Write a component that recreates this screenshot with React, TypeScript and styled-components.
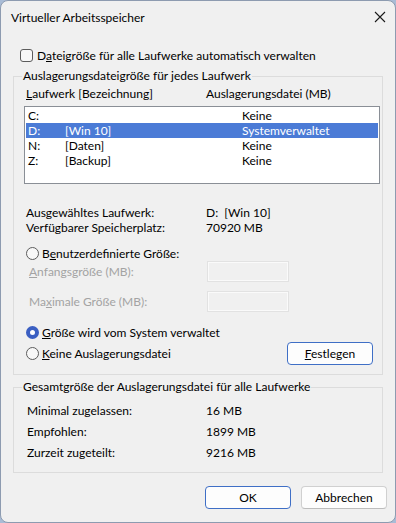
import React from 'react'
import styled, { createGlobalStyle } from 'styled-components'

const GlobalStyle = createGlobalStyle`
    html, body {
        margin: 0;
        padding: 0;
        background: #a9bcd6;
    }
    body {
        font-family: Lato, "Liberation Sans", Arial, sans-serif;
        font-size: 12px;
        color: #000;
    }
`

const SWindow = styled.div`
    box-sizing: border-box;
    width: 396px;
    height: 523px;
    border: 1px solid #8d9bb0;
    border-radius: 8px;
    background-color: #f0f0f0;
    overflow: hidden;
    display: flex;
    flex-direction: column;
`

const STitleBar = styled.div`
    height: 32px;
    display: flex;
    align-items: center;
    justify-content: space-between;
    padding: 0 8px 0 10px;
`

const SClose = styled.div`
    width: 12px;
    height: 12px;
    display: flex;
    margin-right: 1px;
`

const SBody = styled.div`
    display: flex;
    flex-direction: column;
    padding: 0 8px 0 12px;
`

const SCheckRow = styled.label`
    margin: 14px 0 0 7px;
    height: 16px;
    display: flex;
    align-items: center;
    gap: 4px;
`

const SCheckbox = styled.span`
    box-sizing: border-box;
    width: 13px;
    height: 13px;
    border: 1px solid #5c5c5c;
    border-radius: 3px;
    background: #f8f8f8;
`

const SGroup = styled.fieldset<{ $top: number }>`
    margin: ${p => p.$top}px 4px 0 0;
    padding: 0 2px 9px 10px;
    border: 1px solid #dcdcdc;
    min-width: 0;
`

const SLegend = styled.legend`
    padding: 0 1px;
    margin-left: -2px;
    line-height: 16px;
`

const SHeader = styled.div`
    margin-top: 2px;
    height: 16px;
    line-height: 16px;
    display: grid;
    grid-template-columns: 180px 1fr;
    padding-left: 2px;
`

const SList = styled.div`
    margin-top: 4px;
    box-sizing: border-box;
    height: 78px;
    border: 1px solid #8a8f96;
    background: #fff;
    padding: 1px;
`

const SListRow = styled.div<{ $selected?: boolean }>`
    height: 15px;
    line-height: 15px;
    display: grid;
    grid-template-columns: 37px 177px 1fr;
    padding-left: 2px;
    background: ${p => (p.$selected ? '#4b7bd6' : 'transparent')};
    color: ${p => (p.$selected ? '#fff' : '#000')};
`

const SInfo = styled.div<{ $h: number; $indent: number }>`
    height: ${p => p.$h}px;
    line-height: ${p => p.$h}px;
    display: grid;
    grid-template-columns: ${p => 182 - p.$indent}px 1fr;
    padding-left: ${p => p.$indent}px;
`

const SInfoBlock = styled.div<{ $top: number }>`
    margin-top: ${p => p.$top}px;
    display: flex;
    flex-direction: column;
`

const SRadioRow = styled.label<{ $top: number }>`
    margin-top: ${p => p.$top}px;
    height: 16px;
    display: flex;
    align-items: center;
    gap: 3px;
    padding-left: 2px;
`

const SRadio = styled.span<{ $checked?: boolean }>`
    box-sizing: border-box;
    width: 13px;
    height: 13px;
    border-radius: 50%;
    border: ${p => (p.$checked ? '4px solid #3b5fc2' : '1px solid #5c5c5c')};
    background: ${p => (p.$checked ? '#fff' : '#f8f8f8')};
`

const SFieldRow = styled.div<{ $top: number }>`
    margin-top: ${p => p.$top}px;
    height: 21px;
    display: grid;
    grid-template-columns: 178px 82px;
    align-items: center;
    padding-left: 5px;
    color: #a3a3a3;
`

const SDisabledInput = styled.div`
    box-sizing: border-box;
    height: 21px;
    border: 1px solid #e2e2e2;
    box-shadow: inset 0 0 0 1px #fafafa;
    background: #f0f0f0;
`

const SLastRow = styled.div`
    margin-top: 2px;
    height: 23px;
    display: flex;
    align-items: center;
    justify-content: space-between;
    padding-right: 7px;
`

const SButton = styled.button<{ $default?: boolean }>`
    box-sizing: border-box;
    width: 86px;
    height: 23px;
    font-family: inherit;
    font-size: 12px;
    color: #000;
    background: #fdfdfd;
    border: 1px solid ${p => (p.$default ? '#3f6fc6' : '#d0d0d0')};
    border-bottom-color: ${p => (p.$default ? '#3f6fc6' : '#bdbdbd')};
    border-radius: 4px;
    padding: 0;
`

const SFooter = styled.div`
    margin-top: 13px;
    display: flex;
    justify-content: flex-end;
    gap: 10px;
`

const SSummaryRows = styled.div`
    margin-top: 5px;
    display: flex;
    flex-direction: column;
`

const drives = [
    { letter: 'C:', label: '', file: 'Keine' },
    { letter: 'D:', label: '[Win 10]', file: 'Systemverwaltet', selected: true },
    { letter: 'N:', label: '[Daten]', file: 'Keine' },
    { letter: 'Z:', label: '[Backup]', file: 'Keine' },
]

export default function App() {
    return (
        <>
            <GlobalStyle />
            <SWindow>
                <STitleBar>
                    <span>Virtueller Arbeitsspeicher</span>
                    <SClose>
                        <svg width="12" height="12" viewBox="0 0 12 12">
                            <path d="M1 1 L11 11 M11 1 L1 11" stroke="#1a1a1a" strokeWidth="1.1" />
                        </svg>
                    </SClose>
                </STitleBar>
                <SBody>
                    <SCheckRow>
                        <SCheckbox />
                        <span>D<u>a</u>teigröße für alle Laufwerke automatisch verwalten</span>
                    </SCheckRow>

                    <SGroup $top={5}>
                        <SLegend>Auslagerungsdateigröße für jedes Laufwerk</SLegend>
                        <SHeader>
                            <span><u>L</u>aufwerk [Bezeichnung]</span>
                            <span>Auslagerungsdatei (MB)</span>
                        </SHeader>
                        <SList>
                            {drives.map(d => (
                                <SListRow key={d.letter} $selected={d.selected}>
                                    <span>{d.letter}</span>
                                    <span>{d.label}</span>
                                    <span>{d.file}</span>
                                </SListRow>
                            ))}
                        </SList>

                        <SInfoBlock $top={21}>
                            <SInfo $h={15} $indent={2}>
                                <span>Ausgewähltes Laufwerk:</span>
                                <span>D:&nbsp;&nbsp;[Win 10]</span>
                            </SInfo>
                            <SInfo $h={15} $indent={2}>
                                <span>Verfügbarer Speicherplatz:</span>
                                <span>70920 MB</span>
                            </SInfo>
                        </SInfoBlock>

                        <SRadioRow $top={10}>
                            <SRadio />
                            <span>B<u>e</u>nutzerdefinierte Größe:</span>
                        </SRadioRow>
                        <SFieldRow $top={0}>
                            <span><u>A</u>nfangsgröße (MB):</span>
                            <SDisabledInput />
                        </SFieldRow>
                        <SFieldRow $top={9}>
                            <span>Ma<u>x</u>imale Größe (MB):</span>
                            <SDisabledInput />
                        </SFieldRow>

                        <SRadioRow $top={12}>
                            <SRadio $checked />
                            <span><u>G</u>röße wird vom System verwaltet</span>
                        </SRadioRow>
                        <SLastRow>
                            <SRadioRow $top={0}>
                                <SRadio />
                                <span><u>K</u>eine Auslagerungsdatei</span>
                            </SRadioRow>
                            <SButton $default><u>F</u>estlegen</SButton>
                        </SLastRow>
                    </SGroup>

                    <SGroup $top={4}>
                        <SLegend>Gesamtgröße der Auslagerungsdatei für alle Laufwerke</SLegend>
                        <SSummaryRows>
                            <SInfo $h={21} $indent={3}>
                                <span>Minimal zugelassen:</span>
                                <span>16 MB</span>
                            </SInfo>
                            <SInfo $h={21} $indent={3}>
                                <span>Empfohlen:</span>
                                <span>1899 MB</span>
                            </SInfo>
                            <SInfo $h={21} $indent={3}>
                                <span>Zurzeit zugeteilt:</span>
                                <span>9216 MB</span>
                            </SInfo>
                        </SSummaryRows>
                    </SGroup>

                    <SFooter>
                        <SButton $default>OK</SButton>
                        <SButton>Abbrechen</SButton>
                    </SFooter>
                </SBody>
            </SWindow>
        </>
    )
}
